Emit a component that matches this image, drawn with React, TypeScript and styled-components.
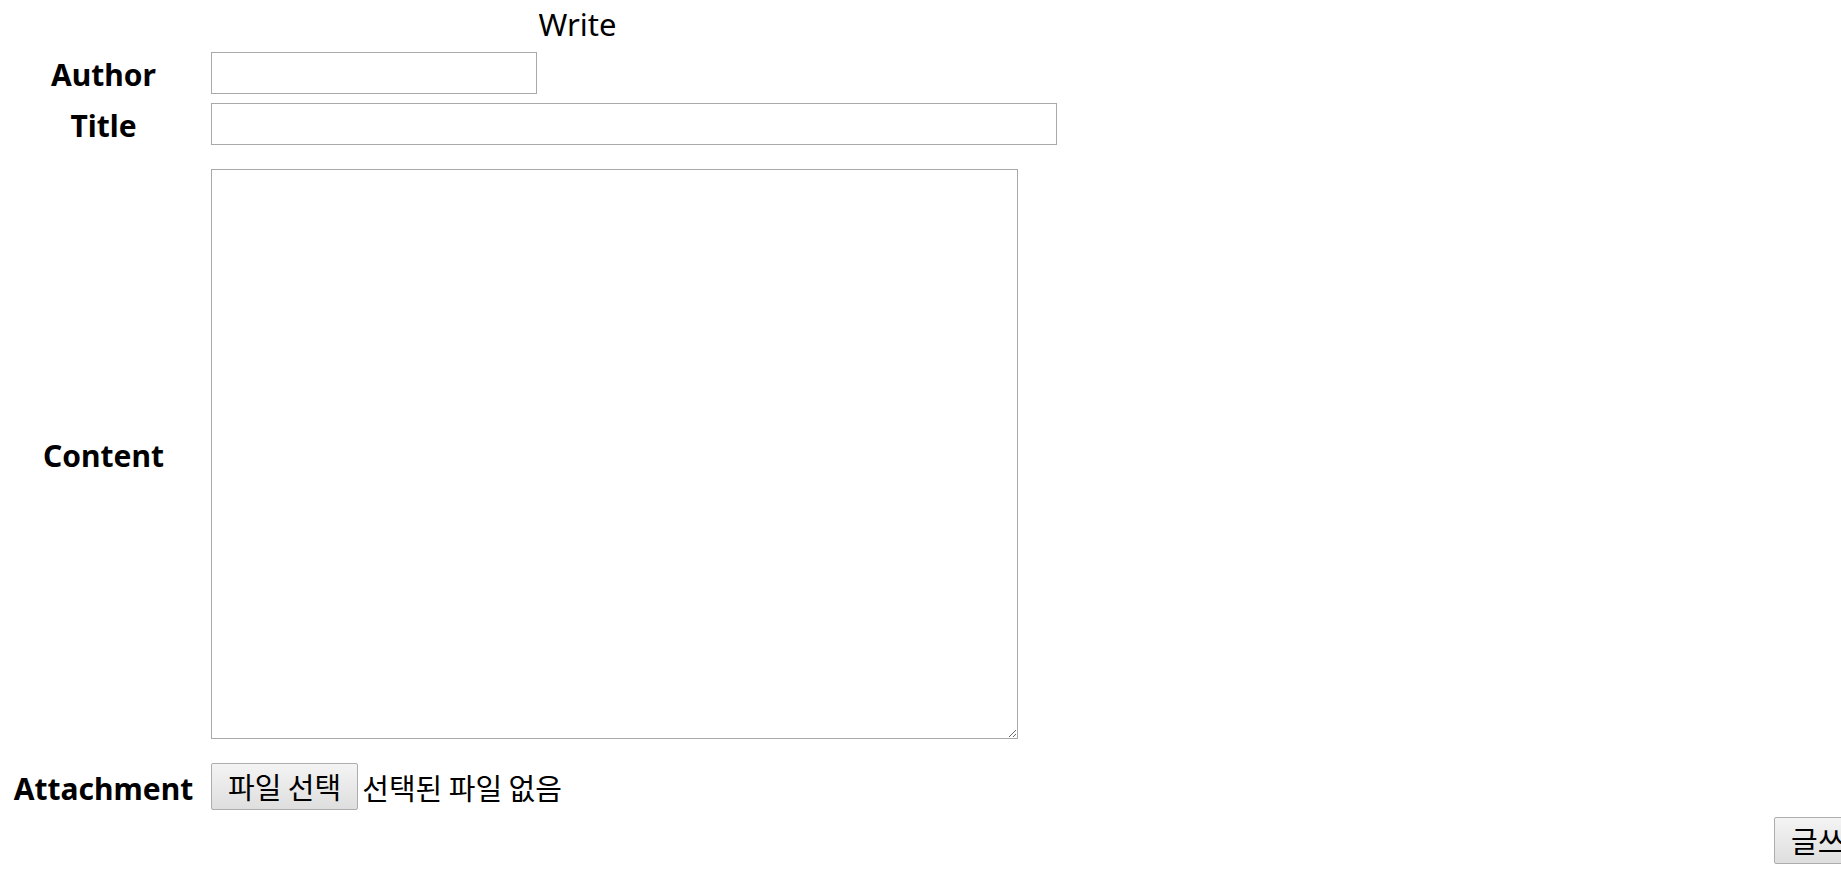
import React from "react";
import styled, { createGlobalStyle } from "styled-components";

const GlobalStyle = createGlobalStyle`
  html, body {
    margin: 0;
    padding: 0;
    overflow: hidden;
    background: #ffffff;
    color: #000000;
    font-family: "Noto Sans", "Noto Sans CJK KR", sans-serif;
  }
`;

const Page = styled.div`
  width: 1888px;
  display: flex;
  flex-direction: column;
`;

const Form = styled.form`
  width: 1155px;
  display: flex;
  flex-direction: column;
`;

const Heading = styled.div`
  text-align: center;
  font-size: 31px;
  font-weight: 400;
  line-height: 44px;
  padding-top: 2px;
  height: 52px;
  box-sizing: border-box;
`;

const FieldRow = styled.div<{ $gap: number }>`
  display: flex;
  align-items: center;
  column-gap: 4px;
  margin-top: ${(p) => p.$gap}px;
`;

const Label = styled.label`
  flex: 0 0 207px;
  text-align: center;
  font-size: 30px;
  font-weight: 700;
  line-height: 39px;
  padding-top: 3px;
`;

const TextInput = styled.input<{ $width: number }>`
  width: ${(p) => p.$width}px;
  height: 42px;
  box-sizing: border-box;
  border: 1px solid #a9a9a9;
  border-radius: 0;
  padding: 2px 4px;
  font-size: 24px;
  font-family: inherit;
  outline: none;
`;

const TextArea = styled.textarea`
  width: 807px;
  height: 570px;
  box-sizing: border-box;
  border: 1px solid #a9a9a9;
  border-radius: 0;
  padding: 4px;
  font-size: 20px;
  font-family: inherit;
  resize: both;
  outline: none;
`;

const FileField = styled.div`
  display: flex;
  align-items: center;
  column-gap: 4px;
`;

const SysButton = styled.button`
  height: 47px;
  box-sizing: border-box;
  padding: 0 16px;
  border: 1px solid #adadad;
  border-radius: 2px;
  background: linear-gradient(#f4f4f4, #dedede);
  color: #000000;
  font-family: "Noto Sans CJK KR", "Noto Sans", sans-serif;
  font-size: 29px;
  line-height: 1;
  white-space: nowrap;
  cursor: default;
`;

const FileStatus = styled.span`
  font-family: "Noto Sans CJK KR", "Noto Sans", sans-serif;
  font-size: 29px;
  white-space: nowrap;
`;

const SubmitRow = styled.div`
  display: flex;
  justify-content: flex-end;
  margin-top: 7px;
`;

export default function App() {
  return (
    <>
      <GlobalStyle />
      <Page>
        <Form onSubmit={(e) => e.preventDefault()}>
          <Heading>Write</Heading>
          <FieldRow $gap={0}>
            <Label>Author</Label>
            <TextInput $width={326} type="text" />
          </FieldRow>
          <FieldRow $gap={9}>
            <Label>Title</Label>
            <TextInput $width={846} type="text" />
          </FieldRow>
          <FieldRow $gap={24}>
            <Label>Content</Label>
            <TextArea />
          </FieldRow>
          <FieldRow $gap={24}>
            <Label>Attachment</Label>
            <FileField>
              <SysButton type="button">파일 선택</SysButton>
              <FileStatus>선택된 파일 없음</FileStatus>
            </FileField>
          </FieldRow>
        </Form>
        <SubmitRow>
          <SysButton type="button">글쓰기</SysButton>
        </SubmitRow>
      </Page>
    </>
  );
}
